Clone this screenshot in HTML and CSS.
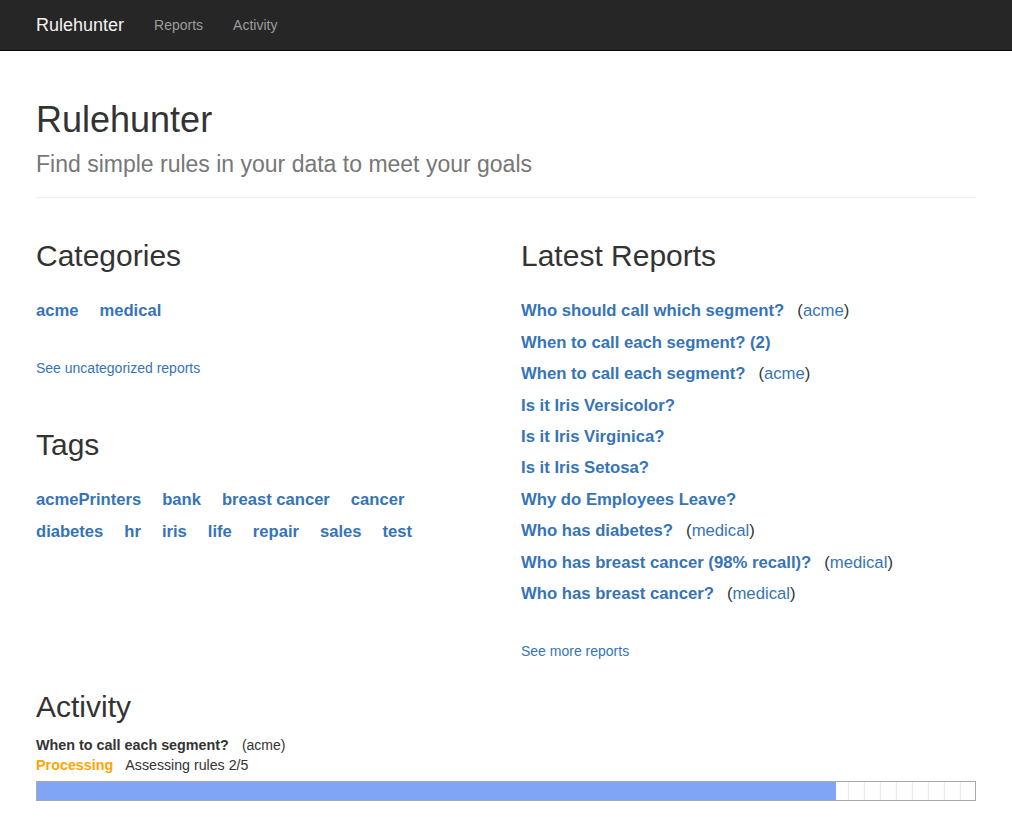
FILE: index.html
```html
<!DOCTYPE html>
<html lang="en">
<head>
<meta charset="utf-8">
<title>Rulehunter</title>
<link rel="stylesheet" href="styles.css">
</head>
<body>
<nav class="navbar">
  <div class="container nav-inner">
    <a class="brand" href="#">Rulehunter</a>
    <a class="nav-link" href="#">Reports</a>
    <a class="nav-link" href="#">Activity</a>
  </div>
</nav>
<main class="container">
  <div class="page-header">
    <h1>Rulehunter<br><small>Find simple rules in your data to meet your goals</small></h1>
  </div>
  <div class="columns">
    <section class="col">
      <h2>Categories</h2>
      <div class="link-list">
        <a href="#">acme</a>
        <a href="#">medical</a>
      </div>
      <p class="more"><a href="#">See uncategorized reports</a></p>
      <h2 class="tags-title">Tags</h2>
      <div class="link-list">
        <a href="#">acmePrinters</a>
        <a href="#">bank</a>
        <a href="#">breast cancer</a>
        <a href="#">cancer</a>
        <a href="#">diabetes</a>
        <a href="#">hr</a>
        <a href="#">iris</a>
        <a href="#">life</a>
        <a href="#">repair</a>
        <a href="#">sales</a>
        <a href="#">test</a>
      </div>
    </section>
    <section class="col">
      <h2>Latest Reports</h2>
      <ul class="reports">
        <li><a class="report" href="#">Who should call which segment?</a><span class="cat">(<a href="#">acme</a>)</span></li>
        <li><a class="report" href="#">When to call each segment? (2)</a></li>
        <li><a class="report" href="#">When to call each segment?</a><span class="cat">(<a href="#">acme</a>)</span></li>
        <li><a class="report" href="#">Is it Iris Versicolor?</a></li>
        <li><a class="report" href="#">Is it Iris Virginica?</a></li>
        <li><a class="report" href="#">Is it Iris Setosa?</a></li>
        <li><a class="report" href="#">Why do Employees Leave?</a></li>
        <li><a class="report" href="#">Who has diabetes?</a><span class="cat">(<a href="#">medical</a>)</span></li>
        <li><a class="report" href="#">Who has breast cancer (98% recall)?</a><span class="cat">(<a href="#">medical</a>)</span></li>
        <li><a class="report" href="#">Who has breast cancer?</a><span class="cat">(<a href="#">medical</a>)</span></li>
      </ul>
      <p class="more"><a href="#">See more reports</a></p>
    </section>
  </div>
  <section class="activity">
    <h2>Activity</h2>
    <div class="act-title"><strong>When to call each segment?</strong><span class="act-cat">(acme)</span></div>
    <div class="act-status"><span class="processing">Processing</span><span class="act-msg">Assessing rules 2/5</span></div>
    <div class="progress">
      <div class="progress-fill" style="width: 85.2%"></div>
      <div class="progress-rest"></div>
    </div>
  </section>
</main>
</body>
</html>
```

FILE: styles.css
```css
* { box-sizing: border-box; }

html, body {
  margin: 0;
  padding: 0;
  background: #fff;
}

body {
  font-family: "Liberation Sans", Arial, Helvetica, sans-serif;
  font-size: 14px;
  line-height: 1.42857;
  color: #333;
}

a {
  color: #3674b7;
  text-decoration: none;
}

.container {
  width: 970px;
  margin: 0 auto;
  padding: 0 15px;
}

/* Navbar */
.navbar {
  background: #262626;
  border-bottom: 1px solid #080808;
  height: 51px;
}

.nav-inner {
  display: flex;
  align-items: center;
  height: 50px;
}

.brand {
  font-size: 18px;
  line-height: 20px;
  color: #f2f2f2;
  padding: 15px 15px 15px 0;
}

.nav-link {
  font-size: 14px;
  line-height: 20px;
  color: #9d9d9d;
  padding: 15px;
}

/* Header */
.page-header {
  margin: 49px 0 21px;
  padding-bottom: 9px;
  border-bottom: 1px solid #eee;
}

h1 {
  margin: 20px 0 9px;
  font-size: 36px;
  line-height: 1.1;
  font-weight: 500;
  color: #333;
}

h1 small {
  font-size: 23px;
  font-weight: 400;
  color: #777;
}

h2 {
  margin: 20px 0 10px;
  font-size: 30px;
  line-height: 33px;
  font-weight: 500;
  color: #333;
}

/* Columns */
.columns {
  display: grid;
  grid-template-columns: 1fr 1fr;
  column-gap: 30px;
}

.link-list {
  display: flex;
  flex-wrap: wrap;
  column-gap: 21px;
  margin-top: 23px;
  font-size: 16.6px;
  line-height: 31.44px;
  font-weight: 700;
}

.more {
  margin: 32.6px 0 10px;
}

.tags-title {
  margin-top: 49px;
}

.reports {
  list-style: none;
  margin: 23px 0 0;
  padding: 0;
  font-size: 16.7px;
  line-height: 31.44px;
}

.report {
  font-weight: 700;
}

.cat {
  margin-left: 13px;
  color: #333;
}

/* Activity */
.activity h2 {
  margin-top: 18px;
  margin-bottom: 12px;
}

.act-title,
.act-status {
  height: 20px;
  line-height: 20px;
}

.act-title strong {
  font-weight: 700;
  font-size: 14.35px;
}

.act-cat {
  margin-left: 13px;
}

.processing {
  color: #ffa500;
  font-weight: 700;
  font-size: 14.35px;
}

.act-msg {
  margin-left: 12px;
  font-size: 14.2px;
}

.progress {
  display: flex;
  margin-top: 6px;
  height: 20px;
  border: 1px solid #aaa;
}

.progress-fill {
  background: #80a4f6;
}

.progress-rest {
  flex: 1;
  background-image: linear-gradient(to right, transparent 0 1px, #e6e6e6 1px 2px, transparent 2px);
  background-size: 16px 100%;
  background-position: right top;
  background-repeat: repeat-x;
}
```
